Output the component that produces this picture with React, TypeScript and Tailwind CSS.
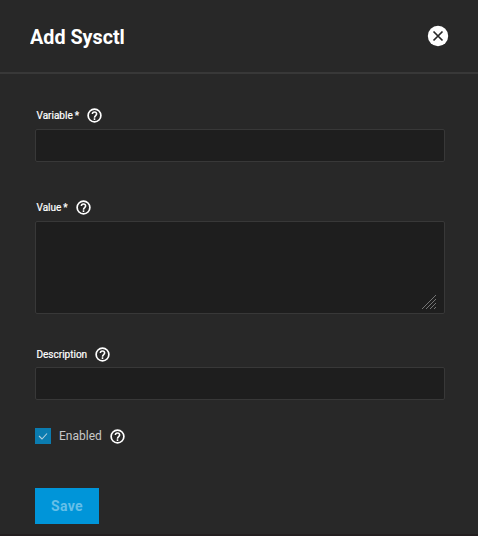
import type { ReactNode } from "react";

function Label({ children, required }: { children: ReactNode; required?: boolean }) {
  return (
    <div className="flex h-[17px] items-center pl-[1.5px] text-[10px] text-white">
      <label className="[-webkit-text-stroke:0.2px_white]">
        {children}
        {required && <span className="ml-[2px]">*</span>}
      </label>
      <HelpIcon />
    </div>
  );
}

function HelpIcon() {
  return (
    <svg className="ml-[7px] size-[17px] shrink-0" viewBox="0 0 24 24" fill="none" stroke="#fff" strokeWidth="2.4">
      <circle cx="12" cy="12" r="9" />
      <path d="M9 10c0-1.7 1.3-3 3-3s3 1.3 3 3c0 2-3 2.3-3 5M12 16v2.2" strokeWidth="2.2" />
    </svg>
  );
}

const box = "block w-full resize-none rounded-[2px] border border-[#383838] bg-[#1e1e1e] px-2 text-xs text-white outline-none";

export default function App() {
  return (
    <div className="flex h-[536px] w-[478px] flex-col overflow-hidden border-b-2 border-[#231f20] bg-[#282828] font-['Roboto',sans-serif]">
      <header className="flex h-[74px] shrink-0 items-center justify-between border-b-2 border-[#383838] pr-7 pl-[30px]">
        <h1 className="mt-[2px] origin-left scale-x-[0.94] font-['Roboto',sans-serif] text-[21px] leading-6 font-bold text-white">Add Sysctl</h1>
        <button aria-label="Close">
          <svg className="size-6" viewBox="0 0 24 24">
            <circle cx="12" cy="12" r="10.2" fill="#fff" />
            <path d="m7.5 7.5 9 9M16.500 7.5l-9 9" stroke="#282828" strokeWidth="1.7" />
          </svg>
        </button>
      </header>
      <form className="flex flex-col pt-[33px] pr-[33px] pl-[35px]">
        <Label required>Variable</Label>
        <input className={box + " mt-[5px] h-[33px]"} />
        <div className="mt-[37px]">
          <Label required>Value</Label>
        </div>
        <div className="relative mt-[5px]">
          <textarea className={box + " h-[93px]"} />
          <svg className="absolute right-[8px] bottom-[4px] size-4" viewBox="0 0 16 16" stroke="#757575" strokeWidth="1" fill="none">
            <path d="M1 15 15 1M5 15 15 5M9 15 15 9M13 15 15 13" />
          </svg>
        </div>
        <div className="mt-[32px]">
          <Label>Description</Label>
        </div>
        <input className={box + " mt-[4px] h-[33px]"} />
        <div className="mt-7 flex h-4 items-center text-xs text-[#c8c8c8]">
          <span className="flex size-4 items-center justify-center bg-[#0b7cb0]">
            <svg className="size-4" viewBox="0 0 16 16" fill="none" stroke="#b4d0de" strokeWidth="1.1">
              <path d="m4 8 3 3 5-5.5" />
            </svg>
          </span>
          <span className="ml-2">Enabled</span>
          <HelpIcon />
        </div>
        <button className="mt-11 h-9 w-16 bg-[#0095d9] text-sm font-bold tracking-[0.3px] text-[#65bfe8]">Save</button>
      </form>
    </div>
  );
}
